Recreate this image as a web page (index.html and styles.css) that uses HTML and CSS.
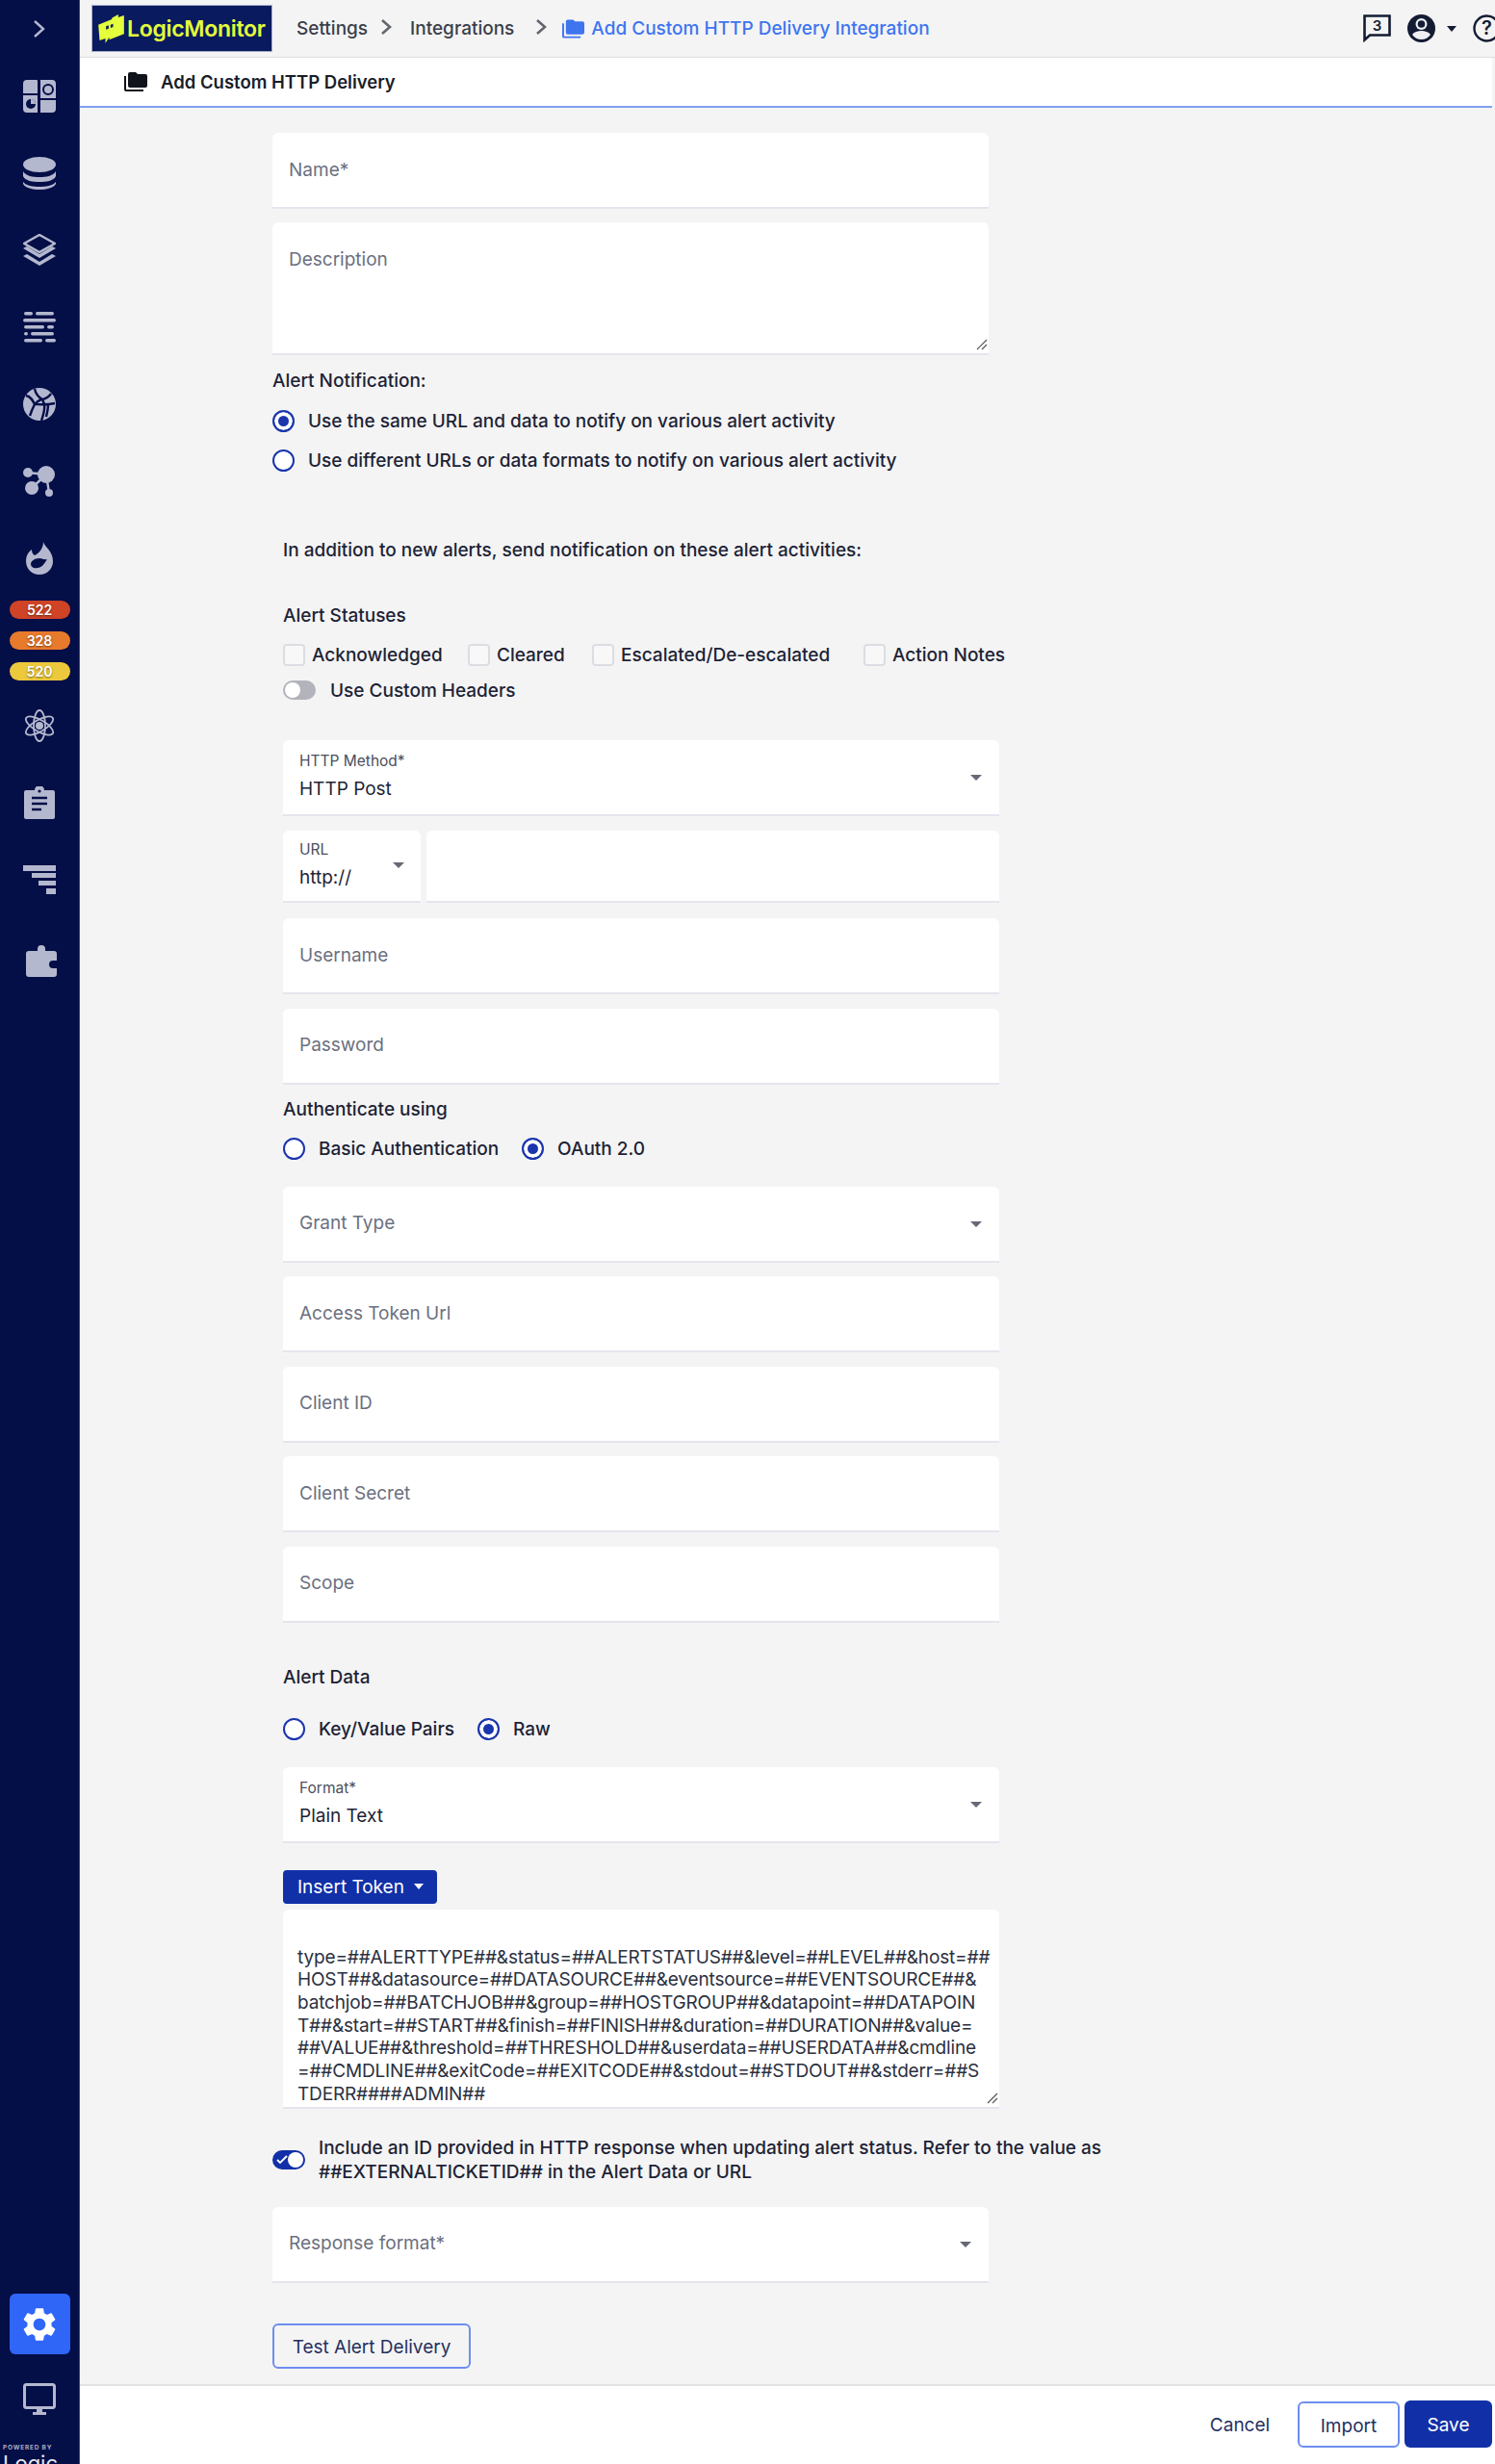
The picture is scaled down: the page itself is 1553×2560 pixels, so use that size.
FILE: index.html
```html
<!DOCTYPE html>
<html lang="en">
<head>
  <meta charset="UTF-8" />
  <meta name="viewport" content="width=device-width, initial-scale=1.0" />
  <title>Add Custom HTTP Delivery Integration | LogicMonitor</title>
  <link rel="stylesheet" href="styles.css">
</head>
<body>
  <nav class="sidebar">
    <svg class="nav-toggle" viewBox="0 0 14 20"><path d="M2 2l9 8-9 8" fill="none" stroke="#b4b8cf" stroke-width="2.4"/></svg>
    <svg class="nav-icon nav-first" viewBox="0 0 34 34"><path d="M4 0h10a1 1 0 0 1 1 1v13H0V4a4 4 0 0 1 4-4zM0 16h15v18H4a4 4 0 0 1-4-4zM18 0h12a4 4 0 0 1 4 4v15H18zM18 21h16v9a4 4 0 0 1-4 4H18z"/><circle cx="26" cy="10" r="5" fill="none" stroke="#040e47" stroke-width="2"/><circle cx="8" cy="25" r="5" fill="#040e47"/><path d="M8 25v-5a5 5 0 0 1 5 5z" fill="#b4b8cf"/></svg>
    <svg class="nav-icon" viewBox="0 0 34 34"><ellipse cx="17" cy="8" rx="17" ry="8"/><path d="M0 15c3 5 10 6 17 6s14-1 17-6v5c-2 5-10 6-17 6S2 25 0 20zM0 26c3 4 10 5 17 5s14-1 17-5v2c-2 4-10 6-17 6S2 32 0 28z"/></svg>
    <svg class="nav-icon" viewBox="0 0 34 34"><path d="M17 1l16 9-16 9-16-9z" fill="none" stroke="#b4b8cf" stroke-width="2.4"/><path d="M0 15l4-2 13 8 13-8 4 2-17 10z"/><path d="M0 23l4-2 13 8 13-8 4 2-17 10z"/></svg>
    <svg class="nav-icon" viewBox="0 0 34 34"><rect x="1" y="1" width="9" height="3.5" rx="1.7"/><rect x="13" y="1" width="19" height="3.5" rx="1.7"/><rect y="8" width="34" height="3.5" rx="1.7"/><rect x="1" y="15" width="21" height="3.5" rx="1.7"/><rect x="25" y="15" width="7" height="3.5" rx="1.7"/><rect x="1" y="22" width="4" height="3.5" rx="1.7"/><rect x="8" y="22" width="24" height="3.5" rx="1.7"/><rect x="1" y="29" width="19" height="3.5" rx="1.7"/><rect x="23" y="29" width="11" height="3.5" rx="1.7"/></svg>
    <svg class="nav-icon" viewBox="0 0 34 34"><circle cx="17" cy="17" r="17"/><path d="M3 8c5 1 7 5 9 9 2-2 5-5 8-5M12 1c1 5 3 8 8 11 4-1 7-3 9-6M12 17c-2 4-4 9-5 12M12 17c5 0 11 1 21-1M20 12c1 2 1 3 2 5M22 17c1 6-1 11-3 17M26 17c0 5-1 9-2 13" fill="none" stroke="#040e47" stroke-width="2.4"/></svg>
    <svg class="nav-icon" viewBox="0 0 34 34"><path d="M5 8l19 2M9 24l15-14M24 10l3 19" stroke="#b4b8cf" stroke-width="2.4" fill="none"/><circle cx="5" cy="8" r="5"/><circle cx="24" cy="10" r="9"/><circle cx="9" cy="24" r="7"/><circle cx="27" cy="29" r="4"/></svg>
    <svg class="nav-icon" viewBox="0 0 34 34"><path fill-rule="evenodd" d="M21 0c1 5 10 9 10 20 0 8-6 14-14 14S3 28 3 20C3 14 6 10 9 8c0 3 1 5 3 6 5-2 9-8 9-14zM17 17c-5 0-9 3-9 6 0 3 3 5 7 4 4 0 7-4 10-9-3 1-5-1-8-1z"/></svg>
    <div class="badge badge-red">522</div>
    <div class="badge badge-orange">328</div>
    <div class="badge badge-yellow">520</div>
    <svg class="nav-icon nav-atom" viewBox="0 0 34 34"><g fill="none" stroke="#b4b8cf" stroke-width="1.8"><ellipse cx="17" cy="17" rx="6" ry="16"/><ellipse cx="17" cy="17" rx="6" ry="16" transform="rotate(60 17 17)"/><ellipse cx="17" cy="17" rx="6" ry="16" transform="rotate(120 17 17)"/></g><circle cx="17" cy="17" r="4"/></svg>
    <svg class="nav-icon" viewBox="0 0 34 34"><path d="M3 4h9a5 5 0 0 1 10 0h9a2 2 0 0 1 2 2v26a2 2 0 0 1-2 2H3a2 2 0 0 1-2-2V6a2 2 0 0 1 2-2z"/><path d="M9 12h16M9 18h16M9 24h10" stroke="#040e47" stroke-width="2.6"/><circle cx="17" cy="5" r="1.6" fill="#040e47"/></svg>
    <svg class="nav-icon" viewBox="0 0 34 34"><rect y="2" width="34" height="6"/><rect x="9" y="10" width="25" height="5"/><rect x="16" y="18" width="18" height="5"/><rect x="24" y="26" width="10" height="6"/></svg>
    <svg class="nav-icon nav-puzzle" viewBox="0 0 34 34"><path d="M4 7h9V5a4 4 0 0 1 8 0v2h9a3 3 0 0 1 3 3v7h-4a4 4 0 0 0 0 8h4v6a3 3 0 0 1-3 3H4a3 3 0 0 1-3-3V10a3 3 0 0 1 3-3z"/></svg>
    <div class="nav-gear">
      <svg viewBox="0 0 24 24" fill="#fff"><path d="M19.14 12.94c.04-.3.06-.61.06-.94 0-.32-.02-.64-.07-.94l2.03-1.58c.18-.14.23-.41.12-.61l-1.92-3.32c-.12-.22-.37-.29-.59-.22l-2.39.96c-.5-.38-1.03-.7-1.62-.94l-.36-2.54c-.04-.24-.24-.41-.48-.41h-3.84c-.24 0-.43.17-.47.41l-.36 2.54c-.59.24-1.13.57-1.62.94l-2.39-.96c-.22-.08-.47 0-.59.22L2.74 8.87c-.12.21-.08.47.12.61l2.03 1.58c-.05.3-.09.63-.09.94s.02.64.07.94l-2.03 1.58c-.18.14-.23.41-.12.61l1.92 3.32c.12.22.37.29.59.22l2.39-.96c.5.38 1.03.7 1.62.94l.36 2.54c.05.24.24.41.48.41h3.84c.24 0 .44-.17.47-.41l.36-2.54c.59-.24 1.13-.56 1.62-.94l2.39.96c.22.08.47 0 .59-.22l1.92-3.32c.12-.22.07-.47-.12-.61l-2.01-1.58zM12 15.6c-1.98 0-3.6-1.62-3.6-3.6s1.62-3.6 3.6-3.6 3.6 1.62 3.6 3.6-1.62 3.6-3.6 3.6z"/></svg>
    </div>
    <svg class="nav-icon nav-monitor" viewBox="0 0 34 34"><rect x="1.500" y="1.500" width="31" height="24" rx="2" fill="none" stroke="#b4b8cf" stroke-width="3"/><path d="M14 26h6v4h4v3H10v-3h4z"/></svg>
    <div class="powered">
      <div class="powered-by">POWERED BY</div>
      <div class="powered-name">Logic</div>
    </div>
  </nav>

  <div class="page">
    <header class="topbar">
      <div class="logo">
        <svg class="logo-mark" viewBox="0 0 80 93"><path fill-rule="evenodd" d="M42 14L62 3V12L80 6V64L34 82V74L22 92V78L4 84L0 35L42 18ZM24 40V50L32 47V37ZM38 35V45L46 42V32Z" fill="#e4ff3b"/></svg>
        <span class="logo-text">LogicMonitor</span>
      </div>
      <span class="crumb">Settings</span>
      <svg class="crumb-sep" viewBox="0 0 12 16"><path d="M2 1l8 7-8 7" fill="none" stroke="#63666f" stroke-width="2.6"/></svg>
      <span class="crumb">Integrations</span>
      <svg class="crumb-sep crumb-sep-last" viewBox="0 0 12 16"><path d="M2 1l8 7-8 7" fill="none" stroke="#63666f" stroke-width="2.6"/></svg>
      <svg class="crumb-folder" viewBox="0 0 24 20"><path d="M6 0h6l2 2h8a2 2 0 0 1 2 2v10a2 2 0 0 1-2 2H6a2 2 0 0 1-2-2V2a2 2 0 0 1 2-2z" fill="#3f74f0"/><path d="M1 4v14a1 1 0 0 0 1 1h18" fill="none" stroke="#3f74f0" stroke-width="2"/></svg>
      <span class="crumb crumb-current">Add Custom HTTP Delivery Integration</span>
      <div class="top-actions">
        <svg class="top-chat" viewBox="0 0 29 29"><path d="M1.500 1.500h26v20H7l-5.500 5z" fill="none" stroke="#141c33" stroke-width="2.600"/><text x="14.500" y="17" text-anchor="middle" class="chat-count">3</text></svg>
        <svg class="top-user" viewBox="0 0 29 29"><circle cx="14.500" cy="14.500" r="14.500" fill="#141c33"/><path d="M5 21c2-3 6-4 9.500-4s7.500 1 9.500 4c-2 3-5.500 5-9.500 5S7 24 5 21z" fill="#eef0f4"/><circle cx="14.500" cy="10" r="6" fill="#eef0f4"/><circle cx="14.500" cy="10" r="3.800" fill="#141c33"/></svg>
        <span class="top-caret"></span>
        <svg class="top-help" viewBox="0 0 29 29"><circle cx="14.500" cy="14.500" r="13" fill="none" stroke="#141c33" stroke-width="2.400"/><text x="14.500" y="21" text-anchor="middle" class="help-mark">?</text></svg>
      </div>
    </header>

    <div class="subheader">
      <svg class="sub-folder" viewBox="0 0 24 20"><path d="M6 0h6l2 2h8a2 2 0 0 1 2 2v10a2 2 0 0 1-2 2H6a2 2 0 0 1-2-2V2a2 2 0 0 1 2-2z" fill="#10131c"/><path d="M1 4v14a1 1 0 0 0 1 1h18" fill="none" stroke="#10131c" stroke-width="2"/></svg>
      <h1>Add Custom HTTP Delivery</h1>
    </div>

    <main class="content">
      <div class="form">
        <div class="field field-first"><span class="placeholder">Name*</span></div>
        <div class="field field-area">
          <span class="placeholder">Description</span>
          <svg class="grip" viewBox="0 0 12 12"><path d="M1 11L11 1M6 11l5-5" stroke="#555" stroke-width="1.200"/></svg>
        </div>

        <div class="label label-notify">Alert Notification:</div>
        <div class="radio-row"><span class="radio radio-on"></span>Use the same URL and data to notify on various alert activity</div>
        <div class="radio-row"><span class="radio"></span>Use different URLs or data formats to notify on various alert activity</div>

        <div class="inner">
          <div class="label label-addition">In addition to new alerts, send notification on these alert activities:</div>
          <div class="label label-statuses">Alert Statuses</div>
          <div class="checks">
            <label class="check check-a"><span class="box"></span>Acknowledged</label>
            <label class="check check-b"><span class="box"></span>Cleared</label>
            <label class="check check-c"><span class="box"></span>Escalated/De-escalated</label>
            <label class="check"><span class="box"></span>Action Notes</label>
          </div>
          <div class="switch-row"><span class="switch"></span>Use Custom Headers</div>

          <div class="field field-method">
            <span class="small-label">HTTP Method*</span>
            <span class="value">HTTP Post</span>
            <span class="caret"></span>
          </div>

          <div class="url-row">
            <div class="field url-scheme">
              <span class="small-label">URL</span>
              <span class="value">http://</span>
              <span class="caret"></span>
            </div>
            <div class="field url-host"></div>
          </div>

          <div class="field field-user"><span class="placeholder">Username</span></div>
          <div class="field"><span class="placeholder">Password</span></div>

          <div class="label label-auth">Authenticate using</div>
          <div class="radio-group radio-group-auth">
            <div class="radio-inline"><span class="radio"></span>Basic Authentication</div>
            <div class="radio-inline"><span class="radio radio-on"></span>OAuth 2.0</div>
          </div>

          <div class="field field-after-radio"><span class="placeholder">Grant Type</span><span class="caret"></span></div>
          <div class="field"><span class="placeholder">Access Token Url</span></div>
          <div class="field"><span class="placeholder">Client ID</span></div>
          <div class="field"><span class="placeholder">Client Secret</span></div>
          <div class="field"><span class="placeholder">Scope</span></div>

          <div class="label label-data">Alert Data</div>
          <div class="radio-group radio-group-data">
            <div class="radio-inline"><span class="radio"></span>Key/Value Pairs</div>
            <div class="radio-inline"><span class="radio radio-on"></span>Raw</div>
          </div>

          <div class="field field-after-radio">
            <span class="small-label">Format*</span>
            <span class="value">Plain Text</span>
            <span class="caret"></span>
          </div>

          <button class="btn-token">Insert Token<span class="caret caret-white"></span></button>

          <div class="raw-data">
            type=##ALERTTYPE##&amp;status=##ALERTSTATUS##&amp;level=##LEVEL##&amp;host=##<br>
            HOST##&amp;datasource=##DATASOURCE##&amp;eventsource=##EVENTSOURCE##&amp;<br>
            batchjob=##BATCHJOB##&amp;group=##HOSTGROUP##&amp;datapoint=##DATAPOIN<br>
            T##&amp;start=##START##&amp;finish=##FINISH##&amp;duration=##DURATION##&amp;value=<br>
            ##VALUE##&amp;threshold=##THRESHOLD##&amp;userdata=##USERDATA##&amp;cmdline<br>
            =##CMDLINE##&amp;exitCode=##EXITCODE##&amp;stdout=##STDOUT##&amp;stderr=##S<br>
            TDERR####ADMIN##
            <svg class="grip" viewBox="0 0 12 12"><path d="M1 11L11 1M6 11l5-5" stroke="#555" stroke-width="1.200"/></svg>
          </div>
        </div>

        <div class="include-row">
          <span class="switch switch-on">
            <svg viewBox="0 0 12 10"><path d="M1 5l3 3 7-7" fill="none" stroke="#fff" stroke-width="1.800"/></svg>
          </span>
          <p>Include an ID provided in HTTP response when updating alert status. Refer to the value as<br>##EXTERNALTICKETID## in the Alert Data or URL</p>
        </div>

        <div class="field field-response"><span class="placeholder">Response format*</span><span class="caret"></span></div>
        <button class="btn-test">Test Alert Delivery</button>
      </div>
    </main>

    <footer class="footer">
      <button class="btn-cancel">Cancel</button>
      <button class="btn-import">Import</button>
      <button class="btn-save">Save</button>
    </footer>
  </div>
</body>
</html>
```

FILE: styles.css
```css
* {
  box-sizing: border-box;
}
body {
  margin: 0;
  width: 1553px;
  height: 2560px;
  overflow: hidden;
  display: flex;
  font-family: 'Inter', sans-serif;
  font-size: 19px;
  color: #1d2336;
  background: #f4f4f4;
}
button {
  font-family: inherit;
  font-size: 19px;
  cursor: pointer;
}

.sidebar {
  width: 83px;
  flex: none;
  display: flex;
  flex-direction: column;
  align-items: center;
  background: #040e47;
  border-right: 1px solid #3c4478;
}
.nav-toggle {
  width: 14px;
  height: 20px;
  margin-top: 20px;
}
.nav-icon {
  width: 34px;
  height: 34px;
  margin-top: 46px;
  flex: none;
  fill: #b4b8cf;
}
.nav-first {
  margin-top: 43px;
}
.badge {
  width: 63px;
  height: 19px;
  border-radius: 10px;
  text-align: center;
  font-size: 14px;
  font-weight: 600;
  line-height: 19px;
  color: #fff;
  text-shadow: 0 1px 2px rgba(0,0,0,0.5);
}
.badge + .badge {
  margin-top: 13px;
}
.badge-red {
  margin-top: 27px;
  background: #cf4326;
}
.badge-orange {
  background: #e87a2c;
}
.badge-yellow {
  background: #ecc93c;
}
.nav-atom {
  margin-top: 30px;
}
.nav-puzzle {
  margin-top: 50px;
  margin-left: 3px;
}
.nav-gear {
  width: 63px;
  height: 63px;
  flex: none;
  margin-top: auto;
  display: flex;
  align-items: center;
  justify-content: center;
  background: #2f66f8;
  border-radius: 6px;
}
.nav-gear svg {
  width: 42px;
  height: 42px;
}
.nav-monitor {
  margin-top: 30px;
}
.powered {
  width: 100%;
  height: 21px;
  flex: none;
  margin-top: 29px;
  padding-left: 3px;
  overflow: hidden;
}
.powered-by {
  font-size: 6.500px;
  font-weight: 700;
  letter-spacing: 0.8px;
  line-height: 8px;
  white-space: nowrap;
  color: #a8acc4;
}
.powered-name {
  font-size: 22px;
  line-height: 24px;
  color: #e6e7ef;
}

.page {
  flex: 1;
  min-width: 0;
  display: flex;
  flex-direction: column;
}

.topbar {
  height: 60px;
  flex: none;
  display: flex;
  align-items: center;
  padding-left: 12px;
  background: #f4f4f4;
  border-bottom: 1px solid #dedede;
}
.logo {
  width: 188px;
  height: 49px;
  flex: none;
  margin-right: 25px;
  display: flex;
  align-items: center;
  padding-left: 6px;
  background: #0a1a5f;
  border: 1px solid #a9b0cc;
}
.logo-mark {
  width: 27px;
  height: 31px;
  margin-right: 3px;
}
.logo-text {
  font-size: 23px;
  font-weight: 600;
  letter-spacing: -0.3px;
  color: #e4ff3b;
}
.crumb {
  font-weight: 500;
  color: #3a3e4b;
  white-space: nowrap;
}
.crumb-sep {
  width: 12px;
  height: 16px;
  flex: none;
  margin: 0 19px 4px 13px;
}
.crumb-sep-last {
  margin-left: 22px;
}
.crumb-folder {
  width: 23px;
  height: 20px;
  flex: none;
  margin: 0 7px 0 -3px;
}
.crumb-current {
  color: #3f74f0;
}
.top-actions {
  margin-left: auto;
  display: flex;
  align-items: center;
  width: 137px;
  flex: none;
  overflow: hidden;
}
.top-chat,
.top-user,
.top-help {
  width: 29px;
  height: 29px;
  flex: none;
}
.top-user {
  margin-left: 17px;
}
.top-caret {
  width: 0;
  height: 0;
  margin: 0 17px 0 12px;
  border-left: 5px solid transparent;
  border-right: 5px solid transparent;
  border-top: 6px solid #141c33;
}
.chat-count {
  font-size: 15px;
  font-weight: 600;
  fill: #141c33;
}
.help-mark {
  font-size: 20px;
  font-weight: 600;
  fill: #141c33;
}

.subheader {
  height: 52px;
  flex: none;
  display: flex;
  align-items: center;
  padding-left: 46px;
  margin-right: 3px;
  background: #fff;
  border-bottom: 2px solid #7f9ff0;
}
.sub-folder {
  width: 24px;
  height: 20px;
  margin-right: 14px;
}
.subheader h1 {
  margin: 0;
  font-size: 18.500px;
  font-weight: 600;
  color: #1a1d29;
}

.content {
  flex: 1;
  min-height: 0;
  overflow: hidden;
  border-bottom: 2px solid #e3e3e3;
}
.form {
  width: 1100px;
  padding: 26px 0 0 200px;
}
.inner {
  padding-left: 11px;
}

.field {
  position: relative;
  width: 744px;
  height: 79px;
  margin-top: 14.500px;
  padding: 0 17px;
  display: flex;
  flex-direction: column;
  justify-content: center;
  background: #fff;
  border-radius: 6px 6px 0 0;
  border-bottom: 2px solid #e4e5ee;
}
.field-first {
  margin-top: 0;
}
.field-area {
  height: 138px;
  margin-top: 14px;
  justify-content: flex-start;
  padding-top: 27px;
}
.placeholder {
  color: #6b7080;
  line-height: 24px;
}
.small-label {
  font-size: 15.500px;
  line-height: 16px;
  color: #4b4f5c;
}
.value {
  line-height: 24px;
  margin-top: 9px;
  color: #1d2336;
}
.caret {
  position: absolute;
  right: 18px;
  top: 36px;
  width: 0;
  height: 0;
  border-left: 6px solid transparent;
  border-right: 6px solid transparent;
  border-top: 6px solid #666a76;
}
.grip {
  position: absolute;
  right: 1px;
  bottom: 3px;
  width: 12px;
  height: 12px;
}

.label {
  font-weight: 500;
  line-height: 24px;
}
.label-notify {
  margin-top: 15px;
}
.label-addition {
  margin-top: 70px;
}
.label-statuses {
  margin-top: 44px;
}
.label-auth {
  margin-top: 14px;
}
.label-data {
  margin-top: 45px;
}

.radio-row,
.radio-inline {
  display: flex;
  align-items: center;
  height: 24px;
  font-weight: 500;
  white-space: nowrap;
}
.radio-row {
  margin-top: 17px;
}
.radio {
  width: 23px;
  height: 23px;
  flex: none;
  margin-right: 14px;
  background: #fff;
  border: 2px solid #1a35ad;
  border-radius: 50%;
}
.radio-on {
  background: #1a35ad;
  box-shadow: inset 0 0 0 4px #fff;
}
.radio-group {
  display: flex;
  gap: 24px;
}
.radio-group-auth {
  margin-top: 17px;
}
.radio-group-data {
  margin-top: 30px;
}

.checks {
  display: flex;
  margin-top: 16px;
}
.check {
  display: flex;
  align-items: center;
  height: 24px;
  font-weight: 500;
  white-space: nowrap;
}
.check-a {
  width: 192px;
}
.check-b {
  width: 129px;
}
.check-c {
  width: 282px;
}
.box {
  width: 23px;
  height: 23px;
  flex: none;
  margin-right: 7px;
  background: #f8f8f9;
  border: 2px solid #dcdde3;
  border-radius: 4px;
}

.switch-row {
  display: flex;
  align-items: center;
  height: 24px;
  margin-top: 13px;
  font-weight: 500;
}
.switch {
  position: relative;
  flex: none;
  width: 34px;
  height: 20px;
  margin-right: 15px;
  background: #b2b3bb;
  border-radius: 10px;
}
.switch::after {
  content: "";
  position: absolute;
  left: 2px;
  top: 2px;
  width: 16px;
  height: 16px;
  background: #fff;
  border-radius: 50%;
}
.switch-on {
  background: #1130a8;
}
.switch-on::after {
  left: auto;
  right: 2px;
}
.switch-on svg {
  position: absolute;
  left: 4px;
  top: 5px;
  width: 12px;
  height: 10px;
}

.field-method {
  margin-top: 40px;
}
.url-row {
  display: flex;
  gap: 6px;
  margin-top: 15px;
}
.url-row .field {
  height: 75px;
  margin-top: 0;
}
.url-scheme {
  width: 143px;
  flex: none;
}
.url-scheme .caret {
  right: 17px;
  top: 33px;
}
.url-host {
  width: 595px;
  flex: none;
}
.field-user {
  margin-top: 16px;
}
.field-after-radio {
  margin-top: 27px;
}

.btn-token {
  display: flex;
  align-items: center;
  width: 160px;
  height: 35px;
  margin-top: 28px;
  padding: 0 0 0 15px;
  color: #fff;
  background: #1130a8;
  border: none;
  border-radius: 4px;
}
.caret-white {
  position: static;
  margin-left: 10px;
  border-left-width: 5px;
  border-right-width: 5px;
  border-top-color: #fff;
}
.raw-data {
  position: relative;
  width: 744px;
  height: 207px;
  margin-top: 6px;
  padding: 38px 0 0 15px;
  letter-spacing: -0.15px;
  line-height: 23.700px;
  white-space: nowrap;
  overflow: hidden;
  color: #2b3040;
  background: #fff;
  border-radius: 6px 6px 0 0;
  border-bottom: 2px solid #e4e5ee;
}

.include-row {
  display: flex;
  align-items: center;
  margin-top: 28px;
}
.include-row p {
  margin: 0 0 0 -1px;
  font-weight: 500;
  line-height: 25px;
  white-space: nowrap;
}
.field-response {
  margin-top: 24px;
}
.btn-test {
  display: block;
  width: 206px;
  height: 47px;
  margin-top: 42px;
  padding-top: 3px;
  color: #26305f;
  background: transparent;
  border: 2px solid #6d8ef0;
  border-radius: 6px;
}

.footer {
  height: 81px;
  flex: none;
  display: flex;
  align-items: flex-start;
  justify-content: flex-end;
  padding: 15px 3px 0 0;
  background: #fff;
}
.footer button {
  padding-top: 3px;
}
.btn-cancel {
  width: 78px;
  height: 49px;
  margin-right: 21px;
  color: #26305f;
  background: none;
  border: none;
}
.btn-import {
  width: 106px;
  height: 48px;
  margin: 1px 5px 0 0;
  color: #26305f;
  background: #fff;
  border: 2px solid #6d8ef0;
  border-radius: 6px;
}
.btn-save {
  width: 91px;
  height: 49px;
  color: #fff;
  background: #1130a8;
  border: none;
  border-radius: 6px;
}
```
